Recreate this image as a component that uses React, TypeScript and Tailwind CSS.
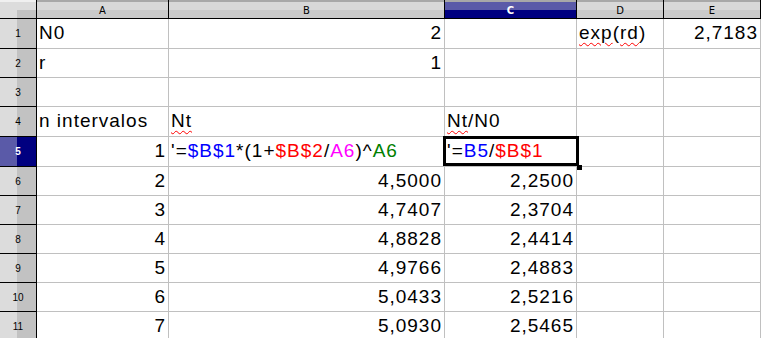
import type { ReactNode } from 'react';

const cols = ['A', 'B', 'C', 'D', 'E'];

const rowsB = ['4,5000', '4,7407', '4,8828', '4,9766', '5,0433', '5,0930'];
const rowsC = ['2,2500', '2,3704', '2,4414', '2,4883', '2,5216', '2,5465'];

function Cell({ children, right, className = '' }: { children?: ReactNode; right?: boolean; className?: string }) {
  return (
    <div
      className={`flex items-center overflow-visible whitespace-nowrap border-r border-b border-[#c0c0c0] bg-white text-[19px] tracking-[1px] text-black ${right ? 'justify-end pr-[2px]' : 'pl-[2px]'} ${className}`}
    >
      {children}
    </div>
  );
}

function Squiggle({ children }: { children: ReactNode }) {
  return <span className="underline decoration-wavy decoration-[#ff0000] decoration-1 underline-offset-[3px]">{children}</span>;
}

function RowHead({ n, active }: { n: number; active?: boolean }) {
  return (
    <div
      className={`flex items-center justify-center border-r border-b border-black text-[10px] ${
        active
          ? 'bg-[linear-gradient(to_right,#5a5aa8_0,#5a5aa8_17px,#000080_17px)] font-bold text-white'
          : 'bg-[linear-gradient(to_right,#dcdcdc_0,#dcdcdc_17px,#c2c2c2_17px)] text-black'
      }`}
    >
      {n}
    </div>
  );
}

export default function App() {
  return (
    <div className="h-[338px] w-[761px] overflow-hidden bg-white font-['Liberation_Sans',Arial,sans-serif]">
      <div className="grid grid-cols-[37px_132px_276px_132px_87px_1fr] grid-rows-[19px_30px_29px_29px_30px_30px_29px_29px_29px_29px_29px_29px]">
        {/* header row */}
        <div className="flex flex-col border-r border-b border-black bg-[#dcdcdc]">
          <div className="h-[2px] bg-[#f0f0f0]" />
          <div className="h-[8px]" />
          <div className="flex flex-1">
            <div className="w-[17px]" />
            <div className="flex-1 bg-[#c2c2c2]" />
          </div>
        </div>
        {cols.map((c) => (
          <div
            key={c}
            className={`flex items-center justify-center border-r border-b border-black pt-[2px] font-['DejaVu_Sans',sans-serif] text-[10px] ${
              c === 'C'
                ? 'bg-[linear-gradient(to_bottom,#a8a8a8_0,#a8a8a8_2px,#5a5aa8_2px,#5a5aa8_10px,#000080_10px)] font-bold text-white'
                : 'bg-[linear-gradient(to_bottom,#a8a8a8_0,#a8a8a8_2px,#d8d8d8_2px,#d8d8d8_10px,#cacaca_10px)] text-black'
            }`}
          >
            {c}
          </div>
        ))}

        {/* row 1 */}
        <RowHead n={1} />
        <Cell>N0</Cell>
        <Cell right>2</Cell>
        <Cell />
        <Cell>
          <Squiggle>exp</Squiggle>(<Squiggle>rd</Squiggle>)
        </Cell>
        <Cell right>2,7183</Cell>

        {/* row 2 */}
        <RowHead n={2} />
        <Cell>r</Cell>
        <Cell right>1</Cell>
        <Cell />
        <Cell />
        <Cell />

        {/* row 3 */}
        <RowHead n={3} />
        <Cell />
        <Cell />
        <Cell />
        <Cell />
        <Cell />

        {/* row 4 */}
        <RowHead n={4} />
        <Cell>n intervalos</Cell>
        <Cell>
          <Squiggle>Nt</Squiggle>
        </Cell>
        <Cell>
          <Squiggle>Nt</Squiggle>/N0
        </Cell>
        <Cell />
        <Cell />

        {/* row 5 */}
        <RowHead n={5} active />
        <Cell right>1</Cell>
        <Cell>
          '=<span className="text-[#0000ff]">$B$1</span>*(1+<span className="text-[#ff0000]">$B$2</span>/
          <span className="text-[#ff00ff]">A6</span>)^<span className="text-[#008000]">A6</span>
        </Cell>
        <Cell className="relative">
          '=<span className="text-[#0000ff]">B5</span>/<span className="text-[#ff0000]">$B$1</span>
          <div className="absolute -top-[1px] -left-[2px] h-[30px] w-[136px] border-[3px] border-black" />
          <div className="absolute top-[28px] left-[132px] h-[5px] w-[5px] bg-black" />
        </Cell>
        <Cell />
        <Cell />

        {/* rows 6-11 */}
        {rowsB.map((b, i) => (
          <div key={i} className="contents">
            <RowHead n={i + 6} />
            <Cell right>{i + 2}</Cell>
            <Cell right>{b}</Cell>
            <Cell right>{rowsC[i]}</Cell>
            <Cell />
            <Cell />
          </div>
        ))}
      </div>
    </div>
  );
}
